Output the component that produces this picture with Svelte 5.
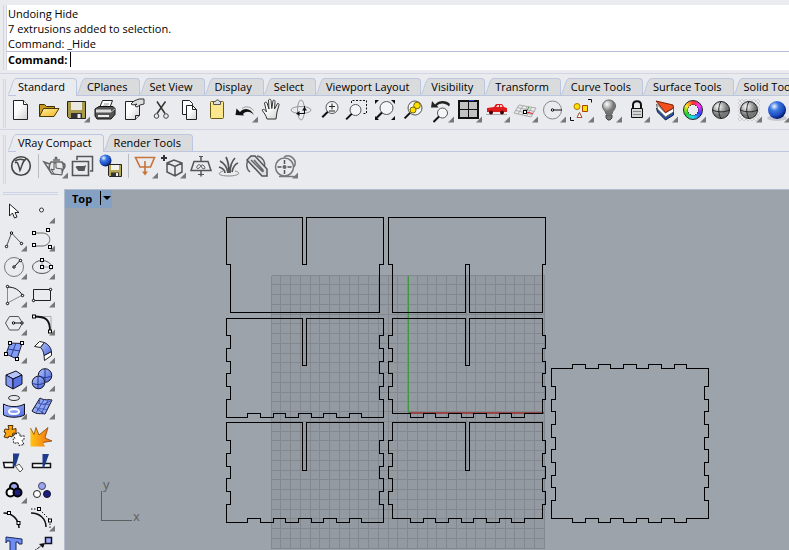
<script>
// every tool icon is drawn on a 28 x 28 tile; menu = small flyout corner
const lens = (x, y, r) => `<circle cx="${x}" cy="${y}" r="${r}" fill="#f4f5f7" stroke="#555"/><path d="M${x - r * 0.7} ${y + r * 0.7}l-5.500 5.500" stroke="#111" stroke-width="2"/>`;
const node = (x, y) => `<rect x="${x - 1.5}" y="${y - 1.5}" width="3" height="3" fill="#fff" stroke="#000"/>`;
const dot = (x, y) => `<circle cx="${x}" cy="${y}" r="1.2" fill="#fff" stroke="#000"/>`;

const standardTabs = ['Standard', 'CPlanes', 'Set View', 'Display', 'Select', 'Viewport Layout', 'Visibility', 'Transform', 'Curve Tools', 'Surface Tools', 'Solid Tools'];
const renderTabs = ['VRay Compact', 'Render Tools'];

let activeStandard = $state('Standard');
let activeRender = $state('VRay Compact');
let command = $state('');

const standardTools = [
    { name: 'New', art: `<path d="M6.500 4.500h10l4 4v15h-14z" fill="url(#paper)" stroke="#222"/><path d="M16.500 4.500v4h4" fill="#fff" stroke="#222"/>` },
    { name: 'Open', art: `<path d="M4.500 20.500v-12h5l2 2h8v3" fill="#c99a1c" stroke="#3b2f0a"/><path d="M4.500 20.500l4-8h15.500l-5 8z" fill="url(#gold)" stroke="#4a3808"/>` },
    { name: 'Save', menu: true, art: `<path d="M4.500 5.500h18v17h-16l-2-2z" fill="#a79a4c" stroke="#222"/><path d="M8 6h11v8H8z" fill="#e9e9e2"/><path d="M8 17h11v5.500H8z" fill="#333"/><path d="M14.500 18h3v4h-3z" fill="#eee"/>` },
    { name: 'Print', art: `<path d="M8.500 12l3-7.500h10l-3 8" fill="#fff" stroke="#222"/><path d="M13 8h5M12 10h5" stroke="#999"/><path d="M4 13l4-2.500h14l2 2v6l-4 4.500H6l-2-3z" fill="#555" stroke="#111"/><path d="M5 13.500h15v3H5z" fill="#ddd"/><path d="M7 20h11" stroke="#eee" stroke-width="2"/><path d="M20 16l4-3" stroke="#bbb"/>` },
    { name: 'Document properties', art: `<path d="M6.500 5.500h14v14l-4 4h-10z" fill="url(#paper)" stroke="#222"/><path d="M20.500 19.500h-4v4" fill="#ccc" stroke="#222"/><path d="M12 8l3-3 5-2h5v5l-4 1-3 2-2-1 2-2-4 1z" fill="#ddd" stroke="#333"/>` },
    { name: 'Cut', art: `<path d="M10 5.500l8 12M18.500 5.500l-8.500 12" stroke="#333" stroke-width="1.500"/><circle cx="9.500" cy="20" r="2.300" fill="none" stroke="#444"/><circle cx="19" cy="20" r="2.300" fill="none" stroke="#444"/>` },
    { name: 'Copy', art: `<path d="M7.500 4.500h7l3 3v11h-10z" fill="#fff" stroke="#222"/><path d="M11.500 9.500h6l4 4v10h-10z" fill="url(#paper)" stroke="#222"/><path d="M17.500 9.500v4h4" fill="none" stroke="#222"/>` },
    { name: 'Paste', art: `<rect x="7.500" y="5.500" width="13" height="17" rx="1" fill="#fbe88e" stroke="#6b5a15"/><path d="M10.500 8.500v-3h2l1-1.500h2l1 1.500h1v3z" fill="#ddd" stroke="#555"/>` },
    { name: 'Undo', menu: true, art: `<path d="M9 16c4-5 11-4 14 3-4-4-8-4-11-1l1 1.500-8.500-.500 1-6.500z" fill="#111"/><path d="M11 12.500c4-3 9-1.500 11.500 2" stroke="#999" fill="none"/>` },
    { name: 'Pan', art: `<path d="M8 23c-1-4-3-6-5-9 1.500-1.500 3 0 4.500 2L5.500 7c1-1.500 2-1 2.500 0l2 6-.5-9c1-1.300 2-1 2.500.3l.8 8.200 1.200-8c1.200-.8 2-.2 2 1L15.500 13l3-5.500c1.300-.3 1.700.6 1.500 1.500l-2 7-1 7z" fill="url(#paper)" stroke="#333"/>` },
    { name: 'Rotate view', art: `<ellipse cx="14" cy="14" rx="10" ry="3.500" fill="none" stroke="#999"/><ellipse cx="14" cy="14" rx="3.500" ry="10" fill="none" stroke="#999"/><path d="M10 17.500h8M17.500 10v8" stroke="#111"/><path d="M9 17.500l3.500-2.500v5zM17.500 11l-2.500 3.500h5z" fill="#111"/>` },
    { name: 'Zoom dynamic', art: lens(17, 11.5, 6) + `<path d="M14 10.500h6M17 7.500v6M14 15h6" stroke="#222"/>` },
    { name: 'Zoom window', art: lens(12.5, 14, 5.5) + `<path d="M8.500 7v-2.500h15v13h-4" fill="none" stroke="#111" stroke-dasharray="2 1.500"/>` },
    { name: 'Zoom extents', art: lens(15.5, 12, 6.5) + `<path d="M4 4h4L4 8zM24 4v4l-4-4zM24 24h-4l4-4zM4 24v-4l4 4z" fill="#111"/>` },
    { name: 'Zoom selected', art: lens(16, 12, 7) + `<circle cx="18" cy="9.500" r="3.300" fill="#ffe000" stroke="#7a6a00"/><circle cx="14" cy="14" r="3" fill="#ffe000" stroke="#7a6a00"/>` },
    { name: 'Undo view change', menu: true, art: lens(15.5, 17, 5) + `<path d="M8 8.500c4-5 12-4 15-.5l-1 2.500c-4-4-9-3.500-12-1l1.500 2H4l1-6.500z" fill="#222"/>` },
    { name: '4 viewports', menu: true, art: `<path d="M4 5h19v17H4z" fill="#c2c2c2" stroke="#111" stroke-width="2"/><path d="M13.500 5v17M4 13.500h19" stroke="#111" stroke-width="1"/><path d="M14 4.500h5" stroke="#24c"/>` },
    { name: 'Set view', menu: true, art: `<path d="M3 18.500h21" stroke="#aaa"/><path d="M4 12l7-1 2-3h6l2 3 3 1v4H4z" fill="#e01b1b"/><path d="M13 11l1.500-2H16v2zM17 9h1.500l1 2H17z" fill="#ffd5d5"/><circle cx="8" cy="16.500" r="2" fill="#400"/><circle cx="19" cy="16.500" r="2" fill="#400"/>` },
    { name: 'Set CPlane', menu: true, art: `<path d="M8 9l17 3-5 9-17-4zM12 10l-5 8M16 11l-5 8M20.500 11.500l-5 8.500M6.500 11.500l17 4M5 14.500l16 4" fill="none" stroke="#aaa"/><path d="M15 16l7 1.500" stroke="#d22"/><path d="M15 16l3-5" stroke="#292"/>` + node(14, 16) },
    { name: 'Object snap', menu: true, art: `<circle cx="13.500" cy="14" r="9" fill="none" stroke="#888"/><path d="M14 14h9" stroke="#111"/>` + dot(13.5, 14) },
    { name: 'Select', menu: true, art: `<circle cx="10" cy="10.500" r="3" fill="#ffe000" stroke="#b07800"/><path d="M15.500 9.500h5v6h-5z" fill="#ffe000" stroke="#b04000"/><path d="M12.500 16.500l2.500 5h-5z" fill="#fff" stroke="#a05030"/><path d="M21 3.500h3.500v3M3.500 21v3.500h3.500" fill="none" stroke="#111"/>` },
    { name: 'Hide', menu: true, art: `<path d="M14 4c-4 0-6.500 3-6.500 6 0 3.500 3 4.500 3.500 8h6c.5-3.500 3.500-4.500 3.500-8 0-3-2.500-6-6.500-6z" fill="url(#steel)" stroke="#666"/><path d="M11 19h6v3l-2 2h-2l-2-2z" fill="#777" stroke="#444"/>` },
    { name: 'Lock', menu: true, art: `<path d="M10 13V9c0-5 8-5 8 0v4" fill="none" stroke="#111" stroke-width="2"/><path d="M8.500 12.500h11v9h-11z" fill="#d5d5d5" stroke="#111"/><path d="M10 15.500h8M10 18.500h8" stroke="#888"/>` },
    { name: 'Layers', menu: true, art: `<path d="M5.500 12l9 9 8-5v3l-8 5-8-8z" fill="#2453b8" stroke="#123"/><path d="M5.500 8l9 9 8-5v4l-8 5-8-8z" fill="#fff" stroke="#666"/><path d="M5 5l17 4 .500 3-8 4.500z" fill="#f2501e" stroke="#7a2408"/>` },
    { name: 'Object properties', menu: true, art: `<foreignObject x="4" y="4" width="20" height="20"><div class="hue"></div></foreignObject>` },
    { name: 'Shade', art: `<circle cx="14" cy="14" r="8.500" fill="url(#steel)" stroke="#222"/><path d="M5.500 14c5 2.500 12 2.500 17 0M14 5.500c-3 5-3 12 0 17" fill="none" stroke="#222"/>` },
    { name: 'Render preview', menu: true, art: `<rect x="3" y="3" width="22" height="22" fill="url(#checks)"/><circle cx="14" cy="14" r="8.500" fill="url(#steel)" stroke="#222"/><path d="M5.500 14c5 2.500 12 2.500 17 0M14 5.500c-3 5-3 12 0 17" fill="none" stroke="#222"/>` },
    { name: 'Render', menu: true, art: `<ellipse cx="14" cy="22" rx="10" ry="3" fill="#c5c8d2"/><circle cx="14" cy="14" r="9" fill="url(#marble)"/>` },
    { name: 'Options', menu: true, art: `<circle cx="14" cy="14" r="8" fill="none" stroke="#555" stroke-width="3"/>` }
];

const renderTools = [
    { name: 'V-Ray options', split: true, art: `<circle cx="14" cy="14" r="9.300" fill="none" stroke="#444" stroke-width="1.600"/><path d="M8 11c2-2 3 0 5 7.500 2-4 2-9 6-11.500M8 9c3-2 6-2 9-1" fill="none" stroke="#444" stroke-width="1.500"/>` },
    { name: 'Render region', menu: true, art: `<path d="M12 8h7M10 10h11c2 3 2 8-1 12h-9c-3-3-4-8-1-12zM9 12l-6-2 6 9M21 11c4 0 4 5 0 7" fill="none" stroke="#666" stroke-width="1.500"/><circle cx="15" cy="6" r="1.500" fill="#666"/><path d="M13 22l-3-5 3 1v-7h2v5l6 1v6z" fill="#e4e5e9" stroke="#555"/>` },
    { name: 'Frame buffer', art: `<path d="M8 8V4.500h15.500V19H21" fill="none" stroke="#555" stroke-width="1.500"/><path d="M3.500 9.500h16v14h-16z" fill="none" stroke="#555" stroke-width="1.600"/><path d="M8 14h7l2-1-1.500 6h-6l-3-4z" fill="#555"/>` },
    { name: 'Save render', split: true, art: `<circle cx="8.500" cy="8.500" r="6" fill="url(#marble)"/><path d="M11.500 12.500h13v12h-12l-1-1z" fill="#b8a950" stroke="#222"/><path d="M14 13h8v5h-8z" fill="#f3f3ec"/><path d="M14 20.500h8v4h-8z" fill="#333"/><path d="M19 21h2v3h-2z" fill="#eee"/>` },
    { name: 'Rectangle light', menu: true, art: `<path d="M4.500 5.500h19l-4 9.500H9zM14 9v12" fill="none" stroke="#c87338" stroke-width="1.600"/><path d="M11 19.500h6L14 23.500z" fill="#c87338"/>` },
    { name: 'Proxy', menu: true, art: `<path d="M8 11l7-3 8 3v9l-7 4-8-4zM8 11l8 3.500 7-3.500M16 14.500V24" fill="none" stroke="#555" stroke-width="1.500"/><path d="M5 3v6M2 6h6" stroke="#333" stroke-width="2"/>` },
    { name: 'Infinite plane', art: `<path d="M7 9.500h14l3 9H4zM14 4.500v5M14 18.500v6" fill="none" stroke="#555" stroke-width="1.500"/><path d="M12 4.500h4M11 22.500h6" stroke="#555"/><path d="M14 14c-3-4-6 3-3 2.500 3-.5 3-6 6-2.500s-2 4-3 0z" fill="none" stroke="#555"/>` },
    { name: 'Fur', art: `<path d="M13 21C12 14 9 11 5 9M14 21c0-7-1-12-3-16M15 21c0-6 2-12 5-15M17 20c1-5 3-8 6-9M10 21c0-3-3-5-6-6" fill="none" stroke="#555" stroke-width="1.700"/><path d="M8 19c-8 3-2 5 6 5s14-3 6-5" fill="none" stroke="#888"/>` },
    { name: 'Clipper', art: `<path d="M7 20c-5-4-4-13 2-15M14 4c6 1 9 7 7 11" fill="none" stroke="#666" stroke-width="1.500"/><path d="M4 8l4-4h4l12 13v7h-5z" fill="#dfe0e4" stroke="#555" stroke-width="1.500"/><path d="M8 8l12 12M11 8l9 10v2" fill="none" stroke="#666" stroke-width="1.500"/>` },
    { name: 'Physical camera', menu: true, art: `<circle cx="13.500" cy="15" r="9" fill="none" stroke="#777" stroke-width="1.500"/><path d="M13 5c6-4 14 3 10 10M8 24.500h15" fill="none" stroke="#777" stroke-width="1.500"/><path d="M13.500 8v4M13.500 18v4M6.500 15h4M16.500 15h4" stroke="#555" stroke-width="1.500"/><circle cx="13.500" cy="15" r="2" fill="#666"/>` }
];

const sideTools = [
    { name: 'Select', art: `<path d="M9.500 7v12l3-3 2 5 2.500-1-2-4.500h4z" fill="#fff" stroke="#222"/>` },
    { name: 'Point', menu: true, art: `<circle cx="13.500" cy="13" r="2" fill="#fff" stroke="#333"/>` },
    { name: 'Polyline', menu: true, art: `<path d="M6.500 21.500l5-13.500 10 10.500" fill="none" stroke="#555"/>` + dot(6.5, 21.5) + dot(11.5, 8) + dot(21.5, 18.5) },
    { name: 'Curve', menu: true, art: `<path d="M6 8h9c9 1 9 12 0 13H6" fill="none" stroke="#666"/>` + node(6, 8) + node(20, 5) + node(6, 20) + node(22, 22) },
    { name: 'Circle', menu: true, art: `<circle cx="14" cy="14" r="9.500" fill="none" stroke="#777"/><path d="M14 14l6.500-7" stroke="#111"/>` + dot(14, 14) + dot(20.5, 7.5) },
    { name: 'Ellipse', menu: true, art: `<ellipse cx="14" cy="14" rx="9.500" ry="6.500" fill="none" stroke="#555"/><path d="M14 7v7h9" fill="none" stroke="#999"/>` + node(14, 7) + node(14, 14) + node(23, 14) },
    { name: 'Arc', menu: true, art: `<path d="M7.500 6v16l15-8" fill="none" stroke="#888"/><path d="M7.500 6c7 0 12 3 15 8.500" fill="none" stroke="#111"/>` + dot(7.5, 5.5) + dot(22.5, 14.5) + dot(7.5, 22.5) },
    { name: 'Rectangle', menu: true, art: `<path d="M5.500 8.500h17v11h-17z" fill="none" stroke="#222"/>` + dot(22.5, 8.5) + dot(5.5, 19.5) },
    { name: 'Polygon', menu: true, art: `<path d="M9.500 7.500h9l4 6.500-4 7h-9L5.500 14z" fill="none" stroke="#555"/><path d="M14 14h8" stroke="#111"/>` + dot(13.5, 14) + dot(22, 14) },
    { name: 'Fillet', menu: true, art: `<path d="M6 7.500h17V22" fill="none" stroke="#aaa"/><path d="M6 7.500c12 0 16 3 16 15" fill="none" stroke="#111" stroke-width="1.800"/>` + node(6, 7.5) + node(22, 22.5) },
    { name: 'Surface', menu: true, art: `<path d="M10 6l12 .5-5 15.500L6 17z" fill="#829df3" stroke="#223"/><path d="M16 6l-5 13M8 12l12 2" stroke="#2b3e8f"/>` + node(10, 6) + node(22, 6) + node(6, 17) + node(17, 22) },
    { name: 'Extrude', menu: true, art: `<path d="M6.500 9.500l5-5 5 1-4 5zM23.500 14.500v4l-7 5-.500-5z" fill="#fff" stroke="#222"/><path d="M12.500 10.500l4-5c4 2 6.500 5 7 9l-7.500 4c-.500-4-1.500-6-3.500-8z" fill="url(#blue)" stroke="#223"/>` },
    { name: 'Box', menu: true, art: `<path d="M6 10l10-4 6 4-9 4z" fill="#b5c4fb" stroke="#112"/><path d="M6 10l7 4v10l-7-4z" fill="#8297f4" stroke="#112"/><path d="M13 14l9-4v9l-9 5z" fill="#5a73e2" stroke="#112"/>` },
    { name: 'Boolean', menu: true, art: `<circle cx="17" cy="10.500" r="6.800" fill="url(#blue)" stroke="#112"/><circle cx="10.500" cy="17.500" r="6.300" fill="url(#blue)" stroke="#112"/><path d="M11 11c4 2 8 2 12 0M17 4v12M4 18c4 2 8 2 12 0M10 11v12" fill="none" stroke="#24388f"/>` },
    { name: 'Project', menu: true, art: `<ellipse cx="14" cy="5" rx="5.500" ry="2.500" fill="none" stroke="#333"/><path d="M3.500 11c6 3.500 15 3.500 21 0v11c-6 3-15 3-21 0z" fill="url(#blue)" stroke="#112"/><ellipse cx="14" cy="18.500" rx="5" ry="2.500" fill="#8ea3f7" stroke="#fff" stroke-width="2"/>` },
    { name: 'Mesh', menu: true, art: `<path d="M12 5c5 3 8 1 12 2l-7 14c-4-1-8 1-13-3z" fill="#92a8f5" stroke="#112"/><path d="M16 6.500L8 20M20 7l-7 14M9.500 9.500c5 3 8 1 12 2M7 14c5 3 8 1 12 3M12 5l-1 6M24 7l-9 5M17 21l-8-5" fill="none" stroke="#3c52b0"/>` },
    { name: 'Join', art: `<path d="M5 8l4 .500-1-4h5l-1 4 4-1v5l-3-.500-1 4-3-1-1 2-4-1 2-4-2-1z" fill="#ffa50f" stroke="#553300"/><path d="M13 14l3-.500 1-2 3 1v3l4-1v4l-2 1 2 4-5 1-1-3-4 1-1-4 2-1z" fill="#fff" stroke="#222" stroke-dasharray="2 1"/>` },
    { name: 'Explode', art: `<path d="M2.500 25.500V7l3.500 6.500 2-7 3 7.500 9-7.500-3 10.500 7 3-9 1.500 2 4z" fill="url(#fire)"/><path d="M2.500 7l3.500 6.500 2-7 3 7.500 9-7.500-3 10.500 7 3-9 1.500" fill="none" stroke="#8a4a10" stroke-width=".8"/>` },
    { name: 'Trim', art: `<path d="M3.500 13.500h10v5h-9z" fill="#fff" stroke="#111" stroke-width="1.500"/><path d="M13 4.500h6.500l-4 13-2.500-.500z" fill="#1e3c8c"/><path d="M15.500 17.500l3.500-2.500 4 5-3 3z" fill="#fff" stroke="#555"/>` },
    { name: 'Split', art: `<path d="M4.500 14.500h18v4h-18z" fill="#fff" stroke="#111" stroke-width="1.500"/><path d="M14.500 5h6.500l-5 14-1.500-1z" fill="#1e3c8c"/>` },
    { name: 'Group', menu: true, art: `<g stroke="#000" stroke-width="2"><circle cx="14" cy="10" r="4" fill="#9ba6ee"/><circle cx="10.500" cy="15.500" r="4" fill="#fff"/><circle cx="17.500" cy="15.500" r="4" fill="#1d1d7c"/></g>` },
    { name: 'Ungroup', art: `<circle cx="14" cy="9" r="3.500" fill="#9ba6ee" stroke="#446"/><circle cx="9" cy="17" r="3.500" fill="#fff" stroke="#222"/><circle cx="19" cy="17" r="3.500" fill="#1d1d7c" stroke="#113"/>` },
    { name: 'Edit points', art: `<path d="M3.500 8c9 0 15 6 15.500 15" fill="none" stroke="#111" stroke-width="1.500"/>` + node(9, 8) + node(18.5, 18) },
    { name: 'Control points', menu: true, art: `<path d="M3 8c9 0 15 6 15 14" fill="none" stroke="#111" stroke-width="1.500"/><path d="M3 4h8l11 11v9" fill="none" stroke="#111" stroke-dasharray="1.500 1.500"/>` + node(11, 4) + node(22, 15.5) },
    { name: 'Text', art: `<path d="M6 4l16 2v5h-3l-1-2h-2v16h-6V8H7l-1 2z" fill="#6f8cf0" stroke="#182860"/>` },
    { name: 'Move', menu: true, art: `<path d="M17.500 4.500h6v6h-6z" fill="#a0b0ff" stroke="#112" stroke-width="1.500"/><path d="M6 18l7-5" stroke="#111" stroke-dasharray="3 1"/><path d="M17 10l-6 1 4 4z" fill="#111"/>` }
];

const gridSteps = Array.from({ length: 29 }, (_, i) => Math.floor(i * 9.75));

const leftTeeth = [335, 348, 361, 373, 386, 399];
const lowTeeth = [440, 453, 466, 478, 491, 504];
const squareTeeth = [386, 399, 411, 424, 437, 449, 462, 475, 487, 500];
const notches = [247, 260, 273, 285, 298, 311, 323, 336, 349, 361];
const tabsDown = [410, 423, 435, 448, 461, 473, 486, 499, 511, 524];
const squareTabs = [572, 585, 598, 610, 623, 636, 648, 661, 674, 686];

// walks along an edge, flipping between the base line and the tooth line at every stop
function vEdge(stops, base, tooth) {
    return stops.map((y, i) => `V${y}H${i % 2 ? base : tooth}`).join('');
}
function hEdge(stops, base, tooth) {
    return stops.map((x, i) => `H${x}V${i % 2 ? base : tooth}`).join('');
}
const back = (list) => [...list].reverse();

function panel(x1, x2, toothL, toothR, top, bottom, toothB, sides, feet, slot, slotEnd) {
    return `M${x1} ${top}${vEdge(sides, x1, toothL)}V${bottom}${hEdge(feet, bottom, toothB)}H${x2}${vEdge(back(sides), x2, toothR)}V${top}H${slot + 4}V${slotEnd}H${slot}V${top}Z`;
}

const outlines = [
    'M226 217V264H230V312H379V264H383V217H306V264H302V217Z',
    'M388 217V264H392V312H465V264H469V312H542V264H545V217Z',
    panel(226, 383, 230, 379, 318, 417, 413, leftTeeth, notches, 302, 365),
    panel(392, 542, 388, 545, 318, 413, 417, leftTeeth, tabsDown, 465, 365),
    panel(226, 383, 230, 379, 422, 522, 518, lowTeeth, notches, 302, 470),
    panel(392, 542, 388, 545, 422, 518, 522, lowTeeth, tabsDown, 465, 470),
    `M551 368${vEdge(squareTeeth, 551, 555)}V518${hEdge(squareTabs, 518, 522)}H708${vEdge(back(squareTeeth), 708, 704)}V368${hEdge(back(squareTabs), 368, 364)}Z`
];
</script>

{#snippet tool(item)}
    <button class="tool" aria-label={item.name}>
        <svg width="28" height="28" viewBox="0 0 28 28" fill="none">
            {@html item.art}
            {#if item.menu}<path d="M27 20.500v6h-6z" fill="#777"/>{/if}
        </svg>
    </button>
    {#if item.split}<span class="split"></span>{/if}
{/snippet}

{#snippet tabBar(names, active, pick)}
    <div class="tabs" role="tablist">
        {#each names as name}
            <button class="tab" class:active={name === active} role="tab" aria-selected={name === active} onclick={() => pick(name)}>
                <svg width="8" height="17" viewBox="0 0 8 17"><path class="slant" d="M0 17C3 15 4 1 8 .5V17z"/><path d="M0 16.500C3 14 4 1 8 .5" fill="none" stroke="#bcc6df"/></svg>
                <span>{name}</span>
            </button>
        {/each}
    </div>
{/snippet}

<svg class="defs" width="0" height="0" aria-hidden="true">
    <defs>
        <linearGradient id="paper" x2="1" y2="1"><stop offset=".4" stop-color="#fff"/><stop offset="1" stop-color="#ccc"/></linearGradient>
        <linearGradient id="gold" x2="1" y2="1"><stop offset="0" stop-color="#fff0a0"/><stop offset="1" stop-color="#f2b51d"/></linearGradient>
        <linearGradient id="fire" x2="1" y2="0"><stop offset="0" stop-color="#ffc414"/><stop offset="1" stop-color="#f06a10"/></linearGradient>
        <linearGradient id="blue" x2="1" y2="1"><stop offset="0" stop-color="#b3c2ff"/><stop offset="1" stop-color="#4866d8"/></linearGradient>
        <radialGradient id="steel" cx=".35" cy=".3"><stop offset="0" stop-color="#fff"/><stop offset="1" stop-color="#777"/></radialGradient>
        <radialGradient id="marble" cx=".35" cy=".3" r=".7"><stop offset="0" stop-color="#f0f6ff"/><stop offset=".35" stop-color="#3d78e0"/><stop offset=".75" stop-color="#1b4cc0"/><stop offset="1" stop-color="#04186a"/></radialGradient>
        <pattern id="checks" width="4" height="4" patternUnits="userSpaceOnUse"><path d="M0 0h2v2H0zM2 2h2v2H2z" fill="#cfd0d4"/></pattern>
    </defs>
</svg>

<div class="app">
    <section class="console">
        <div class="history">
            <p>Undoing Hide</p>
            <p>7 extrusions added to selection.</p>
            <p>Command: _Hide</p>
        </div>
        <div class="prompt">
            <label for="command">Command:</label>
            <i class="caret"></i>
            <input id="command" bind:value={command} autocomplete="off"/>
        </div>
    </section>

    <section class="bar">
        {@render tabBar(standardTabs, activeStandard, (name) => activeStandard = name)}
        <div class="tools">
            {#each standardTools as item}{@render tool(item)}{/each}
        </div>
    </section>

    <section class="bar second">
        {@render tabBar(renderTabs, activeRender, (name) => activeRender = name)}
        <div class="tools">
            {#each renderTools as item}{@render tool(item)}{/each}
        </div>
    </section>

    <main>
        <aside>
            <div class="grip"></div>
            <div class="palette">
                {#each sideTools as item}{@render tool(item)}{/each}
            </div>
        </aside>
        <div class="viewport">
            <svg class="drawing" width="100%" height="100%">
                <defs>
                    <pattern id="minor" width="2" height="2" patternUnits="userSpaceOnUse"><path d="M0 0h1v1H0z" fill="#8b9299"/></pattern>
                </defs>
                <!-- model space starts at 65, 190 -->
                <g transform="translate(-64.5 -189.5)" fill="none" shape-rendering="crispEdges">
                    <rect x="271" y="275" width="273" height="273" fill="#949ba2"/>
                    <rect x="271" y="275" width="273" height="273" fill="url(#minor)" opacity=".4"/>
                    {#each gridSteps as step}
                        <path d="M{271 + step} 275v273M271 {275 + step}h273" stroke="#83888f"/>
                    {/each}
                    <path d="M408 275v137" stroke="#419641"/>
                    <path d="M408 412h135" stroke="#984545" stroke-width="2"/>
                    {#each outlines as d}
                        <path {d} stroke="#000"/>
                    {/each}
                    <path d="M101 490v30h30" stroke="#5d6063"/>
                </g>
                <text x="38" y="299">y</text>
                <text x="68" y="331">x</text>
            </svg>
            <button class="title">Top<i></i><svg width="8" height="4" viewBox="0 0 8 4"><path d="M0 0h8L4 4z"/></svg></button>
        </div>
    </main>
</div>

<style>
    :global(body) {
        background: #eaebef;
    }
    .app {
        display: flex;
        flex-direction: column;
        height: 100vh;
        overflow: hidden;
        font: 11px/15px "Segoe UI", "Open Sans", sans-serif;
        color: #000;
    }
    .defs {
        position: absolute;
    }
    button {
        border: 0;
        padding: 0;
        background: none;
        font: inherit;
        color: inherit;
    }
    .console {
        margin-top: 5px;
        padding-left: 2px;
        margin-left: 3px;
        border-left: 1px solid #d3d6e2;
        flex: none;
    }
    .history, .prompt {
        border-left: 1px solid #d3d6e2;
        background: #fff;
        padding-left: 1px;
    }
    .history {
        height: 47px;
        border-bottom: 1px solid #b5bcd6;
        box-sizing: border-box;
        padding-top: 1px;
    }
    p {
        margin: 0;
    }
    .prompt {
        display: flex;
        align-items: flex-start;
        height: 18px;
    }
    .prompt label {
        font-weight: bold;
    }
    .caret {
        width: 1px;
        height: 15px;
        margin-left: 3px;
        background: #000;
    }
    .prompt input {
        flex: 1;
        border: 0;
        outline: 0;
        padding: 0;
        font: inherit;
        background: none;
    }
    .bar {
        flex: none;
        height: 56px;
        border-top: 1px solid #d3d6e2;
        margin-top: 3px;
        padding: 4px 0 0 8px;
        box-sizing: border-box;
        background: linear-gradient(#d3d6e2, #d3d6e2) 3px 5px / 1px 49px no-repeat, linear-gradient(#d3d6e2, #d3d6e2) 5px 5px / 1px 49px no-repeat;
    }
    .second {
        margin-top: 0;
        height: 60px;
    }
    .tabs {
        display: flex;
        border-bottom: 1px solid #bcc6df;
        height: 17px;
    }
    .tab {
        display: flex;
        flex: none;
        height: 17px;
        --fill: #dadbdd;
    }
    .tab.active {
        height: 18px;
        --fill: #eaebef;
    }
    .tab svg {
        display: block;
    }
    .slant {
        fill: var(--fill);
    }
    .tab span {
        height: 100%;
        box-sizing: border-box;
        padding: 0 11px 0 2px;
        border-top: 1px solid #bcc6df;
        border-right: 1px solid #bcc6df;
        border-radius: 0 4px 0 0;
        background: var(--fill);
        white-space: nowrap;
    }
    .tools {
        display: flex;
        margin-left: -1px;
    }
    .tool {
        flex: none;
        width: 28px;
        height: 28px;
    }
    .tool svg {
        display: block;
    }
    .split {
        flex: none;
        width: 1px;
        height: 24px;
        margin: 2px 2px 2px 3px;
        background: #b9bbc2;
    }
    .tool :global(.hue) {
        width: 18px;
        height: 18px;
        border: 1px solid #222;
        border-radius: 50%;
        background: radial-gradient(circle, #eaebef 5px, #333 5px, transparent 6px), conic-gradient(#ff3030, #ff30ff, #3040ff, #20e0f0, #20d030, #fff020, #ff3030);
    }
    main {
        display: flex;
        flex: 1;
        min-height: 0;
    }
    aside {
        flex: none;
        width: 64px;
        overflow: hidden;
    }
    .grip {
        height: 1px;
        margin: 3px 6px 2px 3px;
        border: solid #cdd3e4;
        border-width: 1px 0;
    }
    .palette {
        display: grid;
        grid-template-columns: 28px 28px;
    }
    .viewport {
        position: relative;
        flex: 1;
        border: solid #b3bbce;
        border-width: 1px 0 0 1px;
        background: #9ca3aa;
        overflow: hidden;
    }
    .drawing {
        display: block;
    }
    .drawing text {
        font-size: 13px;
        fill: #5d6063;
    }
    .title {
        position: absolute;
        left: 0;
        top: 0;
        display: flex;
        align-items: center;
        gap: 2px;
        height: 18px;
        padding: 0 1px 2px 7px;
        background: #84a0c2;
        font-weight: bold;
    }
    .title i {
        width: 1px;
        height: 14px;
        margin-left: 6px;
        background: #000;
    }
</style>
